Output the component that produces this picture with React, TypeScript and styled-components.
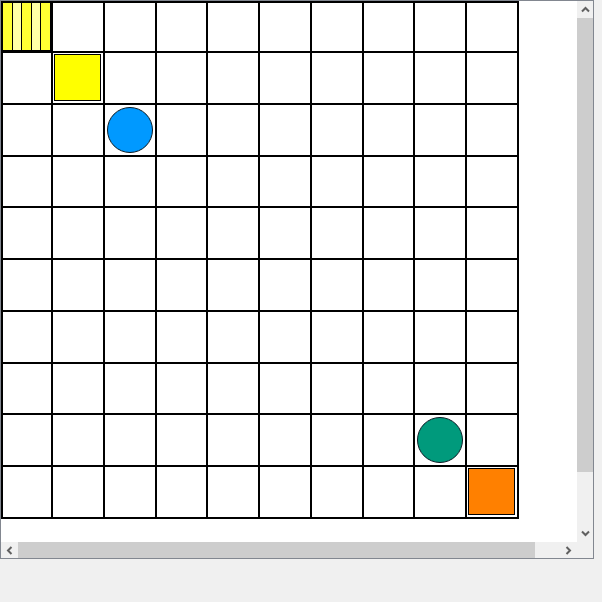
import React from 'react';
import styled, { createGlobalStyle } from 'styled-components';

const GlobalStyle = createGlobalStyle`
  html, body {
    margin: 0;
    padding: 0;
    background: #f0f0f0;
  }
  body {
    font-family: "Liberation Sans", Arial, sans-serif;
  }
`;

type Piece =
  | { kind: 'stripes' }
  | { kind: 'square'; color: string }
  | { kind: 'circle'; color: string };

const SIZE = 10;

const pieces: Record<string, Piece> = {
  '0-0': { kind: 'stripes' },
  '1-1': { kind: 'square', color: '#ffff00' },
  '2-2': { kind: 'circle', color: '#0099ff' },
  '8-8': { kind: 'circle', color: '#009a7c' },
  '9-9': { kind: 'square', color: '#ff8000' },
};

const stripeColors = ['#ffff33', '#ffffa6', '#ffff33', '#ffffa6', '#ffff33'];

const Page = styled.div`
  width: 602px;
  height: 602px;
  background: #f0f0f0;
`;

const Panel = styled.div`
  width: 594px;
  height: 559px;
  box-sizing: border-box;
  border: 1px solid #828790;
  background: #fff;
  display: grid;
  grid-template-columns: 1fr 16px;
  grid-template-rows: 1fr 16px;
`;

const Viewport = styled.div`
  background: #fff;
  overflow: hidden;
`;

const Board = styled.div`
  display: grid;
  grid-template-columns: 48px repeat(${SIZE - 1}, 49.75px);
  grid-template-rows: 48px repeat(${SIZE - 1}, 49.75px);
  gap: 2px;
  padding: 2px;
  background: #000;
  width: fit-content;
`;

const Cell = styled.div`
  background: #fff;
  overflow: hidden;
  display: flex;
  align-items: flex-start;
`;

const Stripes = styled.div`
  display: flex;
  width: 100%;
  height: 100%;
`;

const Stripe = styled.div<{ $color: string }>`
  flex: 1;
  background: ${p => p.$color};
  border-right: 1px solid #000;
  border-bottom: 1px solid #000;
`;

const Square = styled.div<{ $color: string }>`
  box-sizing: border-box;
  width: 47px;
  height: 47px;
  margin: 1px;
  background: ${p => p.$color};
  border: 1px solid #000;
`;

const Circle = styled.div<{ $color: string }>`
  box-sizing: border-box;
  width: 46px;
  height: 46px;
  margin: auto;
  background: ${p => p.$color};
  border: 1px solid #0a1a24;
  border-radius: 50%;
`;

const VBar = styled.div`
  background: #f0f0f0;
  display: flex;
  flex-direction: column;
`;

const HBar = styled.div`
  background: #f0f0f0;
  display: flex;
`;

const Corner = styled.div`
  background: #f0f0f0;
`;

const ArrowButton = styled.div`
  flex: 0 0 17px;
  display: flex;
  align-items: center;
  justify-content: center;
  color: #606060;
`;

const Track = styled.div<{ $vertical?: boolean }>`
  flex: 1;
  display: flex;
  flex-direction: ${p => (p.$vertical ? 'column' : 'row')};
`;

const Thumb = styled.div`
  background: #cdcdcd;
`;

const Chevron = ({ dir }: { dir: 'up' | 'down' | 'left' | 'right' }) => {
  const rot = { up: 0, right: 90, down: 180, left: 270 }[dir];
  return (
    <svg width="9" height="9" viewBox="0 0 9 9" style={{ transform: `rotate(${rot}deg)` }}>
      <polyline points="1,6.5 4.5,3 8,6.5" fill="none" stroke="currentColor" strokeWidth="2" />
    </svg>
  );
};

const renderPiece = (piece?: Piece) => {
  if (!piece) return null;
  if (piece.kind === 'stripes') {
    return (
      <Stripes>
        {stripeColors.map((c, i) => (
          <Stripe key={i} $color={c} />
        ))}
      </Stripes>
    );
  }
  if (piece.kind === 'circle') return <Circle $color={piece.color} />;
  return <Square $color={piece.color} />;
};

const App = () => {
  const cells = [];
  for (let r = 0; r < SIZE; r++) {
    for (let c = 0; c < SIZE; c++) {
      cells.push(<Cell key={`${r}-${c}`}>{renderPiece(pieces[`${r}-${c}`])}</Cell>);
    }
  }

  return (
    <Page>
      <GlobalStyle />
      <Panel>
        <Viewport>
          <Board>{cells}</Board>
        </Viewport>
        <VBar>
          <ArrowButton>
            <Chevron dir="up" />
          </ArrowButton>
          <Track $vertical>
            <Thumb style={{ height: 454 }} />
          </Track>
          <ArrowButton>
            <Chevron dir="down" />
          </ArrowButton>
        </VBar>
        <HBar>
          <ArrowButton>
            <Chevron dir="left" />
          </ArrowButton>
          <Track>
            <Thumb style={{ width: 517 }} />
          </Track>
          <ArrowButton>
            <Chevron dir="right" />
          </ArrowButton>
        </HBar>
        <Corner />
      </Panel>
    </Page>
  );
};

export default App;
